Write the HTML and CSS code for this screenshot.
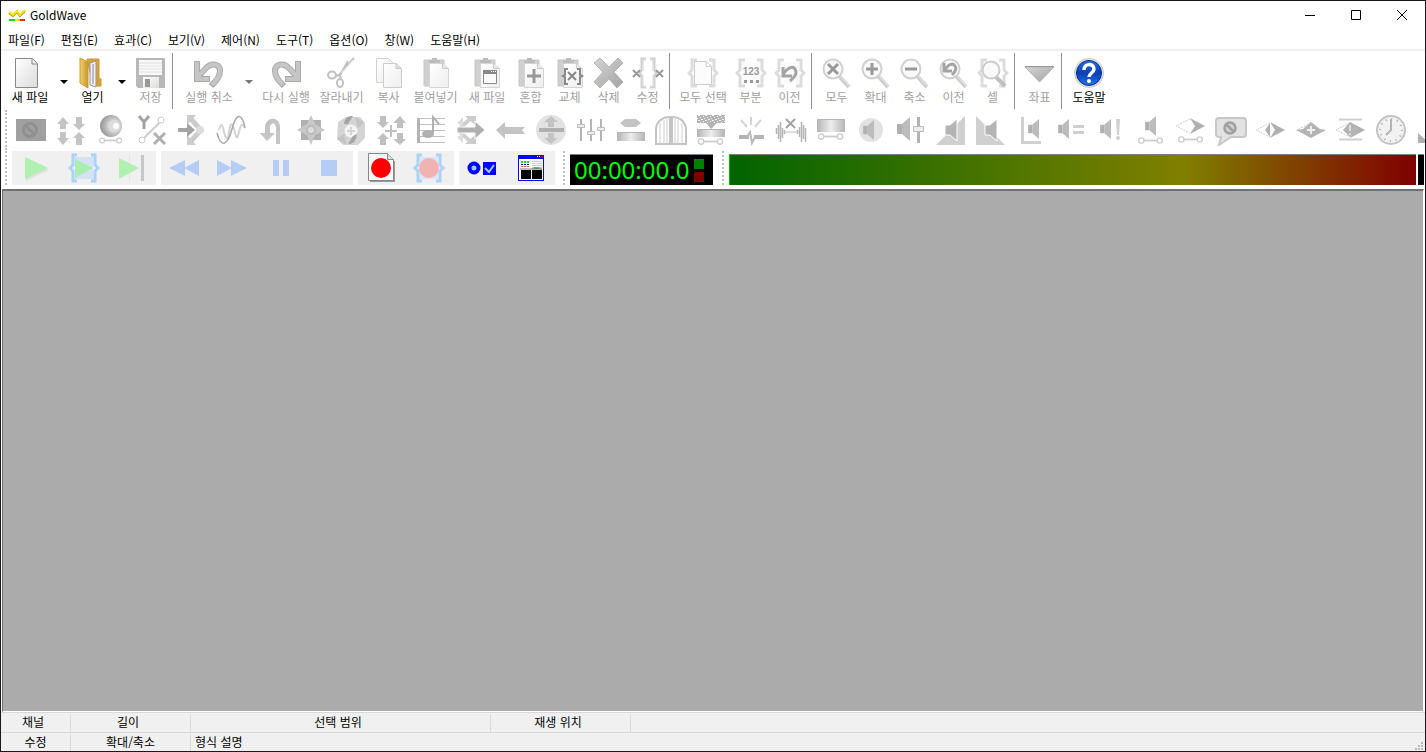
FILE: index.html
```html
<!DOCTYPE html>
<html lang="ko">
<head>
<meta charset="utf-8">
<title>GoldWave</title>
<link rel="stylesheet" href="styles.css">
</head>
<body>
<svg class="defs" aria-hidden="true">
  <defs>
    <linearGradient id="paper" x1="0" y1="0" x2="1" y2="1"><stop offset="0" stop-color="#fff"/><stop offset="1" stop-color="#dcdcdc"/></linearGradient>
    <linearGradient id="pale" x1="0" y1="0" x2="1" y2="1"><stop offset="0" stop-color="#fff"/><stop offset="1" stop-color="#eee"/></linearGradient>
    <linearGradient id="steel" x1="0" y1="0" x2="1" y2="1"><stop offset="0" stop-color="#d4d4d4"/><stop offset="1" stop-color="#a4a4a4"/></linearGradient>
    <linearGradient id="gold" x1="0" y1="0" x2="1" y2="0"><stop offset="0" stop-color="#f4cf68"/><stop offset="1" stop-color="#c9962c"/></linearGradient>
    <linearGradient id="tube" x1="0" y1="0" x2="1" y2="0"><stop offset="0" stop-color="#b4b4b4"/><stop offset=".5" stop-color="#eee"/><stop offset="1" stop-color="#b4b4b4"/></linearGradient>
    <radialGradient id="ball" cx=".65" cy=".5" r=".6"><stop offset="0" stop-color="#f4f4f4"/><stop offset=".5" stop-color="#ccc"/><stop offset="1" stop-color="#999"/></radialGradient>
    <linearGradient id="blue" x1="0" y1="0" x2="0" y2="1"><stop offset="0" stop-color="#2a72e0"/><stop offset=".5" stop-color="#0c3fb4"/><stop offset="1" stop-color="#2470e8"/></linearGradient>
    <pattern id="noise" width="7" height="5" patternUnits="userSpaceOnUse"><rect width="7" height="5" fill="#b4b4b4"/><path d="M0 0h1v1h-1zM3 1h2v1h-2zM1 2h1v1h-1zM5 3h1v1h-1zM2 4h1v1h-1zM6 0h1v1h-1z" fill="#f4f4f4"/></pattern>
    <symbol id="braces" viewBox="0 0 32 32"><path d="M10 3H5v10l-3 3 3 3v10h5M22 3h5v10l3 3-3 3v10h-5" fill="none" stroke="currentColor" stroke-width="3"/></symbol>
    <symbol id="undo-arrow" viewBox="0 0 32 32"><g fill="none" stroke="#aaa" stroke-width="6"><path d="M4 4v18h13M4 21L13 11c6-6 14-4 14 3 0 6-4 10-9 15"/><path d="M4 5v17h12M4 21L13 11c6-6 14-4 14 3 0 6-4 10-8 14" stroke="#c6c6c6" stroke-width="4"/></g></symbol>
    <symbol id="clip" viewBox="0 0 32 32"><path d="M4 3h20v26H4z" fill="#d0d0d0" stroke="#c6c6c6"/><path d="M9 6V3h3V1h5v2h3v3z" fill="#bcbcbc"/><path d="M9.500 6.500h13l6 5v19h-19z" fill="url(#pale)" stroke="#d4d4d4"/><path d="M22.500 6.500v5h6" fill="#e8e8e8" stroke="#ccc"/></symbol>
    <symbol id="lens" viewBox="0 0 32 32"><path d="M18 19l10 11" stroke="#ccc" stroke-width="4"/><path d="M19 19l10 11" stroke="#eee" stroke-width="1"/><circle cx="12" cy="12" r="9.5" fill="#fafafa" stroke="#d0d0d0" stroke-width="2"/></symbol>
    <symbol id="line" viewBox="0 0 32 10"><path d="M6 5h20" stroke="#ccc" stroke-width="2"/><circle cx="5" cy="5" r="3" fill="#fff" stroke="#ccc" stroke-width="1.5"/><circle cx="26" cy="5" r="3" fill="#fff" stroke="#ccc" stroke-width="1.5"/></symbol>
    <symbol id="speaker" viewBox="0 0 14 24"><path d="M0 7h5v10H0z" fill="#b0b0b0"/><path d="M5 7l8-7v24l-8-7z" fill="#bcbcbc"/></symbol>
    <symbol id="diamond" viewBox="0 0 32 16"><path d="M15 1L1 8l14 7" fill="#fff" stroke="#ccc" stroke-dasharray="2 1"/><path d="M15 0l15 8-15 8 5-8z" fill="#b0b0b0"/></symbol>
  </defs>
</svg>
<main class="window">
  <header class="titlebar">
    <svg class="logo" viewBox="0 0 18 16"><path d="M1 6l4 3 4-4 3 4 5-5" fill="none" stroke="#a89400" stroke-width="2"/><path d="M1 5l4 3 4-4 3 4 5-5" fill="none" stroke="#ffe600" stroke-width="2"/><path d="M1 12h6v2H1z" fill="#0d2"/><path d="M7 12h5v2H7z" fill="#fd0"/><path d="M12 12h5v2h-5z" fill="#f20"/></svg>
    <h1>GoldWave</h1>
    <div class="caption">
      <button aria-label="최소화"><svg viewBox="0 0 12 12"><path d="M1 6.500h10" stroke="#000"/></svg></button>
      <button aria-label="최대화"><svg viewBox="0 0 12 12"><path d="M1.500 1.500h9v9h-9z" fill="none" stroke="#000"/></svg></button>
      <button aria-label="닫기"><svg viewBox="0 0 12 12"><path d="M1 1l10 10M11 1L1 11" stroke="#000"/></svg></button>
    </div>
  </header>
  <nav class="menu">
    <button>파일(F)</button><button>편집(E)</button><button>효과(C)</button><button>보기(V)</button><button>제어(N)</button><button>도구(T)</button><button>옵션(O)</button><button>창(W)</button><button>도움말(H)</button>
  </nav>

  <div class="tools">
    <button class="tool mid on"><svg viewBox="0 0 32 32"><path d="M1.500 1.500h17l5 5v24h-22z" fill="url(#paper)" stroke="#888"/><path d="M18 1.500v5.500h5.500" fill="#eee" stroke="#888"/></svg>새 파일</button>
    <button class="drop" aria-label="새 파일 목록"><svg viewBox="0 0 8 4"><path d="M0 0h8L4 4z"/></svg></button>
    <button class="tool on"><svg viewBox="0 0 32 32"><path d="M10 2h12v19l2 1v7h-8z" fill="#d9a436" stroke="#c9973a"/><path d="M13 6l6-2v26l-6-2z" fill="#eee" stroke="#999"/><path d="M16 7v20" stroke="#bbc" stroke-width="2"/><path d="M3 1l8 4v26l-8-5z" fill="url(#gold)" stroke="#c49a38"/></svg>열기</button>
    <button class="drop" aria-label="열기 목록"><svg viewBox="0 0 8 4"><path d="M0 0h8L4 4z"/></svg></button>
    <button class="tool"><svg viewBox="0 0 32 32"><path d="M1 1h29v30H3l-2-2z" fill="#b8b8b8"/><path d="M4 3h23v15H4z" fill="#fafafa"/><path d="M4 6h23M4 9h23M4 12h23M4 15h23" stroke="#ddd"/><path d="M8 20h16v11H8z" fill="url(#paper)"/><path d="M10 22h5v8h-5z" fill="#999"/></svg>저장</button>
    <hr>
    <button class="tool undo"><svg viewBox="0 0 32 32"><use href="#undo-arrow"/></svg>실행 취소</button>
    <button class="drop off" aria-label="실행 취소 목록"><svg viewBox="0 0 8 4"><path d="M0 0h8L4 4z"/></svg></button>
    <button class="tool wide"><svg viewBox="0 0 32 32"><use href="#undo-arrow" transform="translate(32 0) scale(-1 1)"/></svg>다시 실행</button>
    <button class="tool long"><svg viewBox="0 0 32 32"><path d="M28 1L13 18l-4 1M22 4l-8 14 1 5" fill="none" stroke="#c0c0c0" stroke-width="2"/><path d="M27 3L15 16" stroke="#eee"/><ellipse cx="6" cy="18" rx="4" ry="3.500" fill="none" stroke="#c0c0c0" stroke-width="2"/><ellipse cx="14" cy="26" rx="3" ry="4" fill="none" stroke="#c0c0c0" stroke-width="2"/></svg>잘라내기</button>
    <button class="tool"><svg viewBox="0 0 32 32"><path d="M3.500 1.500h12l4 4v20h-16z" fill="url(#pale)" stroke="#d0d0d0"/><path d="M10.500 6.500h13l5 5v19h-18z" fill="url(#pale)" stroke="#ccc"/><path d="M23 6.500v5h5" fill="#ddd" stroke="#ccc"/></svg>복사</button>
    <button class="tool long"><svg viewBox="0 0 32 32"><use href="#clip"/></svg>붙여넣기</button>
    <button class="tool mid"><svg viewBox="0 0 32 32"><use href="#clip"/><path d="M12.500 13.500h13v13h-13z" fill="#fafafa" stroke="#888"/><path d="M12 13h14v4H12z" fill="#888"/><path d="M20 14h1v1h-1zM22 14h1v1h-1zM24 14h1v1h-1z" fill="#fff"/></svg>새 파일</button>
    <button class="tool"><svg viewBox="0 0 32 32"><use href="#clip"/><path d="M19 12v14M12 19h14" stroke="#999" stroke-width="3"/></svg>혼합</button>
    <button class="tool"><svg viewBox="0 0 32 32"><use href="#clip"/><path d="M14 12h-3v6l-2 1 2 1v7h3M23 12h3v6l2 1-2 1v7h-3M14 15l8 8M22 15l-8 8" fill="none" stroke="#888" stroke-width="2"/></svg>교체</button>
    <button class="tool"><svg viewBox="0 0 32 32"><path d="M7 1l9 9 9-9 5 5-9 9 9 10-6 6-8-9-9 9-6-6 9-10-9-9z" fill="url(#steel)" stroke="#b4b4b4"/></svg>삭제</button>
    <button class="tool"><svg viewBox="0 0 32 32"><path d="M14 2h-4v11l-2 3 2 3v11h4M18 2h4v11l2 3-2 3v11h-4" fill="none" stroke="#d0d0d0" stroke-width="3"/><path d="M14 3h-3v11l-2 2 2 2v11h3M18 3h3v11l2 2-2 2v11h-3" fill="none" stroke="#eee"/><path d="M1 13l7 7M8 13l-7 7M24 13l7 7M31 13l-7 7" stroke="#999" stroke-width="2"/></svg>수정</button>
    <hr>
    <button class="tool wide"><svg viewBox="0 0 32 32"><use href="#braces"/><path d="M7.500 4.500h12l5 5v18h-17z" fill="#fcfcfc" stroke="#ccc"/><path d="M19 4.500v5h5" fill="none" stroke="#ccc"/></svg>모두 선택</button>
    <button class="tool"><svg viewBox="0 0 32 32"><use href="#braces"/><path d="M7 5h18v22H7z" fill="#fafafa"/><text x="16" y="18" class="digits">123</text><path d="M9 23h3v3H9zM15 23h3v3h-3zM21 23h3v3h-3z" fill="#999"/></svg>부분</button>
    <button class="tool"><svg viewBox="0 0 32 32"><use href="#braces"/><path d="M7 5h18v22H7z" fill="#fafafa"/><path d="M9 10v9h9M9 18c4-8 10-9 12-6 3 4 0 8-5 12" fill="none" stroke="#a4a4a4" stroke-width="3"/></svg>이전</button>
    <hr>
    <button class="tool"><svg viewBox="0 0 32 32"><use href="#lens"/><path d="M7 7l10 10M17 7L7 17" stroke="#999" stroke-width="3"/></svg>모두</button>
    <button class="tool"><svg viewBox="0 0 32 32"><use href="#lens"/><path d="M12 6v12M6 12h12" stroke="#999" stroke-width="3"/></svg>확대</button>
    <button class="tool"><svg viewBox="0 0 32 32"><use href="#lens"/><path d="M6 12h12" stroke="#999" stroke-width="3"/></svg>축소</button>
    <button class="tool"><svg viewBox="0 0 32 32"><use href="#lens"/><path d="M6 6v8h8M6 14c5-8 9-8 11-5 2 3 0 6-3 9" fill="none" stroke="#a4a4a4" stroke-width="3"/></svg>이전</button>
    <button class="tool"><svg viewBox="0 0 32 32"><use href="#braces"/><path d="M19 20l9 9" stroke="#c0c0c0" stroke-width="4"/><circle cx="14" cy="13" r="8.500" fill="#fafafa" stroke="#ccc" stroke-width="2"/></svg>셀</button>
    <hr>
    <button class="tool"><svg viewBox="0 0 32 32"><path d="M1 10h29L15.500 25z" fill="url(#steel)" stroke="#b4b4b4"/><path d="M1 9.500h29" stroke="#999"/></svg>좌표</button>
    <hr>
    <button class="tool help on"><svg viewBox="0 0 32 32"><circle cx="16" cy="16" r="14.500" fill="#ddd" stroke="#ccc"/><circle cx="16" cy="16" r="12.500" fill="url(#blue)" stroke="#063090"/><path d="M11 13c0-7 10-7 10-1 0 4-5 4-5 8" fill="none" stroke="#fff" stroke-width="3.500"/><circle cx="16" cy="24" r="2" fill="#fff"/></svg>도움말</button>
  </div>

  <div class="effects">
    <i class="grip"></i>
    <button aria-label="검열"><svg viewBox="0 0 32 32"><path d="M1 5h30v22H1z" fill="#a0a0a0"/><circle cx="15" cy="16" r="6.500" fill="none" stroke="#909090" stroke-width="3"/><path d="M10 11l10 10" stroke="#909090" stroke-width="3"/></svg></button>
    <button aria-label="압축"><svg viewBox="0 0 32 32"><path d="M8 3l6 7h-3v5H5v-5H2zM8 31l6-7h-3v-6H5v6H2zM24 16l6-6h-3V3h-6v7h-3zM24 18l6 6h-3v7h-6v-7h-3z" fill="#c4c4c4"/></svg></button>
    <button aria-label="도플러"><svg viewBox="0 0 32 32"><circle cx="16" cy="12" r="11" fill="url(#ball)"/><circle cx="19" cy="12" r="6" fill="#ddd"/><circle cx="21" cy="12" r="3" fill="#fff"/><use href="#line" x="3" y="22" width="26" height="9"/></svg></button>
    <button aria-label="동적 범위"><svg viewBox="0 0 32 32"><path d="M4 2l5 6 5-6M9 8v7" stroke="#a4a4a4" stroke-width="3" fill="none"/><path d="M8 25L26 7" stroke="#ccc" stroke-width="2"/><circle cx="26" cy="6" r="3" fill="#fff" stroke="#ccc"/><circle cx="7" cy="26" r="3" fill="#fff" stroke="#ccc"/><path d="M19 19l11 11M30 19L19 30" stroke="#b0b0b0" stroke-width="3"/></svg></button>
    <button aria-label="에코"><svg viewBox="0 0 32 32"><path d="M16 5l8 9M16 27l8-9" stroke="#ccc" stroke-width="5"/><path d="M12 1h9l-9 10zM12 31h9l-9-10z" fill="#ccc"/><circle cx="25" cy="16" r="4" fill="#ddd"/><path d="M3 14h9V9l8 7-8 7v-5H3z" fill="#a4a4a4"/></svg></button>
    <button aria-label="필터"><svg viewBox="0 0 32 32"><path d="M4 16c2-7 3-7 5 2s4 7 5 0 3-12 5-3 3 12 5 3 3-9 6-4" fill="none" stroke="#d4d4d4" stroke-width="2"/><path d="M2 19c4 16 11 12 15-4S27-2 30 14" fill="none" stroke="#aaa" stroke-width="1.500"/></svg></button>
    <button aria-label="반전"><svg viewBox="0 0 32 32"><path d="M5 19h5v-5c0-12 15-12 15-1v17h-4V14c0-6-6-6-6 0v5h5l-8 8z" fill="#c4c4c4"/></svg></button>
    <button aria-label="기계음"><svg viewBox="0 0 32 32"><path d="M6 6h20v20H6z" fill="#b0b0b0"/><path d="M16 1l4 9 10 6-10 5-4 10-4-10-10-5 10-6z" fill="#c8c8c8"/><circle cx="16" cy="16" r="5" fill="#bbb"/><circle cx="16" cy="16" r="3" fill="#ddd"/></svg></button>
    <button aria-label="오프셋"><svg viewBox="0 0 32 32"><path d="M3 8l8-5 14 0 5 6v15l-7 7H8l-6-6z" fill="#d4d4d4"/><circle cx="16" cy="17" r="6.500" fill="#f4f4f4"/><path d="M9 10q1-9 9-8l-5 8zM22 20q-1 10-9 10l5-8z" fill="#a4a4a4"/><path d="M20 3l9 5-6 6M12 31l-10-6 7-5" fill="#c4c4c4"/><path d="M16 13v8M12 17h8" stroke="#d4d4d4" stroke-width="2"/></svg></button>
    <button aria-label="속도"><svg viewBox="0 0 32 32"><path d="M8 14l6-6h-3V2H5v6H2zM25 2l6 7h-3v5h-6V9h-4zM8 19l6 6h-3v6H5v-6H2zM25 31l6-6h-3v-6h-6v6h-4z" fill="#c0c0c0"/><path d="M16 11v12M10 17h12" stroke="#c0c0c0" stroke-width="2"/></svg></button>
    <button aria-label="음높이"><svg viewBox="0 0 32 32"><path d="M2 4.500h28M2 10.500h28M2 16.500h28M2 22.500h28M2 28.500h28" stroke="#c0c0c0"/><path d="M3.500 4v25" stroke="#b4b4b4" stroke-width="3"/><ellipse cx="13" cy="20" rx="6" ry="4" fill="#b0b0b0"/><path d="M18 20V3l6 7" fill="none" stroke="#b0b0b0" stroke-width="2"/></svg></button>
    <button aria-label="반향"><svg viewBox="0 0 32 32"><path d="M5 14L15 5M5 18l10 9" stroke="#d0d0d0" stroke-width="4"/><path d="M10 2h11v10zM10 30h11V20z" fill="#ccc"/><path d="M2 9l6-6v9M2 23l6 6v-9" fill="#ddd"/><path d="M2 13h18V7l10 9-10 9v-6H2z" fill="#b0b0b0" stroke="#fff"/></svg></button>
    <button aria-label="뒤집기"><svg viewBox="0 0 32 32"><path d="M1 16l9-8v5h20l-3 3 3 4H10v5z" fill="#c4c4c4"/></svg></button>
    <button aria-label="음량 변형"><svg viewBox="0 0 32 32"><circle cx="16" cy="16" r="15" fill="#e2e2e2"/><path d="M16 2l7 6h-4v5h-6V8H9zM16 30l7-6h-4v-5h-6v5H9z" fill="#c4c4c4"/><path d="M4 14h25v4H4z" fill="#b0b0b0"/></svg></button>
    <button aria-label="이퀄라이저"><svg viewBox="0 0 32 32"><path d="M6 5v22M16 5v22M26 5v22" stroke="#b4b4b4" stroke-width="2"/><path d="M2.500 10.500h7v3h-7zM12.500 17.500h7v3h-7zM22.500 13.500h7v3h-7z" fill="#eee" stroke="#bbb"/></svg></button>
    <button aria-label="스펙트럼"><svg viewBox="0 0 32 32"><path d="M5 9l5-4h11l5 4-5 4H10z" fill="#c4c4c4"/><path d="M2 18h28v9H2z" fill="url(#tube)"/><path d="M2 18.500h28" stroke="#b4b4b4"/></svg></button>
    <button aria-label="게이트"><svg viewBox="0 0 32 32"><path d="M1 30V16C1 7 8 3 15 3v27zM17 3c7 0 14 4 14 13v14H17z" fill="#fff" stroke="#c4c4c4" stroke-width="2"/><path d="M5 9v21M9 6v24M12 5v25M20 5v25M23 6v24M27 9v21" stroke="#ccc"/></svg></button>
    <button aria-label="잡음 감소"><svg viewBox="0 0 32 32"><path d="M2 1h28v8H2z" fill="url(#noise)"/><path d="M11 9h11l-6 6z" fill="#b4b4b4"/><path d="M2 15h28v8H2z" fill="url(#tube)"/><path d="M2 15.500h28" stroke="#b4b4b4"/><use href="#line" x="1" y="23" width="30" height="9"/></svg></button>
    <button aria-label="클릭 제거"><svg viewBox="0 0 32 32"><path d="M16 3v8M6 6l6 7M26 6l-6 7" stroke="#d4d4d4" stroke-width="2"/><path d="M4 23h10M19 23h10" stroke="#b4b4b4" stroke-width="4"/><path d="M12 23l3-5 2 11 3-6" fill="none" stroke="#bbb" stroke-width="2"/></svg></button>
    <button aria-label="무음 제거"><svg viewBox="0 0 32 32"><path d="M1.500 14v6M3.500 11v14M5.500 8v20M7.500 14v10M9.500 16v4M22.500 16v4M24.500 13v10M26.500 8v20M28.500 11v14M30.500 14v14" stroke="#b4b4b4" stroke-width="1.500"/><path d="M9 18h14" stroke="#c0c0c0"/><path d="M11 5l9 9M20 5l-9 9" stroke="#a4a4a4" stroke-width="2"/></svg></button>
    <button aria-label="평활화"><svg viewBox="0 0 32 32"><path d="M2 5h28v13H2z" fill="url(#tube)"/><path d="M2 5.500h28" stroke="#b4b4b4"/><use href="#line" x="1" y="18" width="30" height="9"/></svg></button>
    <button aria-label="자동 음량"><svg viewBox="0 0 32 32"><circle cx="16" cy="16" r="12" fill="#e2e2e2"/><use href="#speaker" x="8" y="6" width="12" height="20"/></svg></button>
    <button aria-label="음량"><svg viewBox="0 0 32 32"><use href="#speaker" x="2" y="3" width="14" height="24"/><path d="M23.500 3v26" stroke="#b4b4b4" stroke-width="3"/><path d="M18.500 12.500h10v5h-10z" fill="#eee" stroke="#bbb"/></svg></button>
    <button aria-label="페이드 인"><svg viewBox="0 0 32 32"><path d="M1 31L30 2v29z" fill="#d0d0d0"/><path d="M10 11h5l7-6v22l-7-6h-5z" fill="#b4b4b4" stroke="#fff"/></svg></button>
    <button aria-label="페이드 아웃"><svg viewBox="0 0 32 32"><path d="M1 2l29 29H1z" fill="#d0d0d0"/><path d="M10 11h5l7-6v22l-7-6h-5z" fill="#b4b4b4" stroke="#fff"/></svg></button>
    <button aria-label="최대화 음량"><svg viewBox="0 0 32 32"><path d="M7.500 3v25.500H26" fill="none" stroke="#d0d0d0" stroke-width="3"/><use href="#speaker" x="13" y="5" width="12" height="20"/></svg></button>
    <button aria-label="음량 일치"><svg viewBox="0 0 32 32"><use href="#speaker" x="3" y="5" width="12" height="20"/><path d="M18 12.500h11M18 18.500h11" stroke="#d0d0d0" stroke-width="3"/></svg></button>
    <button aria-label="최대 음량"><svg viewBox="0 0 32 32"><use href="#speaker" x="5" y="5" width="12" height="20"/><path d="M21 5h4l-1 16h-2z" fill="#d0d0d0"/><circle cx="23" cy="24" r="2" fill="#d0d0d0"/></svg></button>
    <button aria-label="음량 곡선"><svg viewBox="0 0 32 32"><use href="#speaker" x="10" y="2" width="12" height="20"/><use href="#line" x="2" y="22" width="28" height="9"/></svg></button>
    <button aria-label="팬"><svg viewBox="0 0 32 32"><use href="#diamond" x="0" y="4" width="32" height="16"/><use href="#line" x="2" y="21" width="28" height="9"/></svg></button>
    <button aria-label="음성 제거"><svg viewBox="0 0 32 32"><path d="M4 4h24q3 0 3 3v13q0 3-3 3H16L4 31l2-8H4q-3 0-3-3V7q0-3 3-3z" fill="#e2e2e2" stroke="#c8c8c8" stroke-width="2"/><circle cx="15" cy="14" r="5.500" fill="#d0d0d0" stroke="#a0a0a0" stroke-width="2.500"/><path d="M11 10l8 8" stroke="#a0a0a0" stroke-width="2.500"/></svg></button>
    <button aria-label="채널 혼합"><svg viewBox="0 0 32 32"><use href="#diamond" x="0" y="8" width="32" height="16"/><path d="M15 9v14l-5-7z" fill="#b0b0b0"/></svg></button>
    <button aria-label="최대 일치"><svg viewBox="0 0 32 32"><path d="M16 9L2 16l14 7" fill="#fff" stroke="#ccc" stroke-dasharray="2 1"/><path d="M16 8l9 7 6 1-15 8-9-5-6-3 7-1z" fill="#b4b4b4"/><path d="M16 12v8M12 16h8" stroke="#eee" stroke-width="2"/></svg></button>
    <button aria-label="스테레오"><svg viewBox="0 0 32 32"><path d="M4 5.500h23M4 25.500h23" stroke="#d0d0d0" stroke-width="2"/><use href="#diamond" x="0" y="8" width="32" height="16"/><path d="M15 8l-7 8 7 7 9-7z" fill="#b4b4b4"/><path d="M15 11v6M15 19v2" stroke="#ddd" stroke-width="2"/></svg></button>
    <button aria-label="시간"><svg viewBox="0 0 32 32"><circle cx="16" cy="16" r="14" fill="#f2f2f2" stroke="#c4c4c4" stroke-width="2"/><circle cx="16" cy="16" r="11" fill="none" stroke="#aaa" stroke-width="2" stroke-dasharray="1 4.760"/><path d="M16 5v11l-5 5" fill="none" stroke="#b4b4b4" stroke-width="2"/></svg></button>
    <button aria-label="배치"><svg viewBox="0 0 32 32"><path d="M3 19l11 10H3z" fill="#b0b0b0"/></svg></button>
  </div>

  <div class="transport">
    <i class="grip"></i>
    <div class="group">
      <button aria-label="재생"><svg viewBox="0 0 48 34"><path d="M14 7l23 12-23 11z" fill="#e0e0e0"/><path d="M13 6l23 11-23 11z" fill="#b0f0b0"/></svg></button>
      <button aria-label="선택 재생"><svg viewBox="0 0 48 34"><path d="M15 6h18v22H15z" fill="#d4e2f4"/><path d="M17 4h-4v10l-3 3 3 3v10h4M31 4h4v10l3 3-3 3v10h-4" fill="none" stroke="#acd2f8" stroke-width="3"/><path d="M15 8l18 9-18 10z" fill="#a8eeb0"/></svg></button>
      <button aria-label="끝 재생"><svg viewBox="0 0 48 34"><path d="M21 4h1v26h-1z" fill="#e4e4e4"/><path d="M11 7l20 10-20 11z" fill="#b0f0b0"/><path d="M33 4h3v26h-3z" fill="#c4c8c8"/></svg></button>
    </div>
    <div class="group">
      <button aria-label="되감기"><svg viewBox="0 0 48 34"><path d="M24 9v16L8 17zM38 9v16l-15-8z" fill="#b4ccf6"/></svg></button>
      <button aria-label="빨리 감기"><svg viewBox="0 0 48 34"><path d="M8 9v16l15-8zM22 9v16l16-8z" fill="#b4ccf6"/></svg></button>
      <button aria-label="일시 정지"><svg viewBox="0 0 48 34"><path d="M16 9h6v16h-6zM26 9h6v16h-6z" fill="#b4ccf6"/></svg></button>
      <button aria-label="정지"><svg viewBox="0 0 48 34"><path d="M16 9h16v16H16z" fill="#b4ccf6"/></svg></button>
    </div>
    <div class="group">
      <button aria-label="녹음"><svg viewBox="0 0 48 34"><path d="M12 10h25v21H12z" fill="#999"/><path d="M10.500 2.500h19l6 6v21h-25z" fill="#f8f8f8" stroke="#888"/><path d="M29.500 2.500v6h6" fill="#ddd" stroke="#888"/><circle cx="23" cy="17" r="10" fill="#f00"/></svg></button>
      <button aria-label="선택 녹음"><svg viewBox="0 0 48 34"><path d="M14 6h18v22H14z" fill="#dbe6f4"/><path d="M16 4h-4v10l-3 3 3 3v10h4M30 4h4v10l3 3-3 3v10h-4" fill="none" stroke="#acd2f8" stroke-width="3"/><circle cx="23" cy="17" r="10" fill="#f2b2b2"/></svg></button>
    </div>
    <div class="group">
      <button aria-label="제어 속성"><svg viewBox="0 0 48 34"><circle cx="15" cy="17" r="4.500" fill="#9ce" stroke="#00f" stroke-width="4"/><path d="M24 11h13v13H24z" fill="#00f"/><path d="M26 17l4 4 5-7" fill="none" stroke="#9cf" stroke-width="2"/></svg></button>
      <button aria-label="창 배치"><svg viewBox="0 0 48 34"><path d="M11 4h26v26H11z" fill="#00f"/><path d="M12 8h24v21H12z" fill="#fff"/><path d="M30 5h1v1h-1zM32 5h1v1h-1z" fill="#fff"/><path d="M34 5h2v1h-2z" fill="#f00"/><path d="M14 11h9" stroke="#0e0" stroke-width="2" stroke-dasharray="2 1"/><path d="M14 13.500h9" stroke="#00f" stroke-dasharray="2 1"/><path d="M14 15.500h9" stroke="#f44" stroke-dasharray="2 1"/><path d="M25 10.500h10M25 12.500h10M25 14.500h10" stroke="#ccc"/><path d="M13 18h22M25 17h10" stroke="#777"/><path d="M27 17h5" stroke="#0a0"/><path d="M14 19h10v9H14zM25 19h10v9H25z"/></svg></button>
    </div>
    <i class="grip later"></i>
    <div class="clock"><output>00:00:00.0</output><div class="lights"><i></i><i></i></div></div>
    <i class="grip later"></i>
    <div class="meter"></div>
    <div class="edge"></div>
  </div>

  <section class="workspace" aria-label="작업 영역"></section>

  <footer class="status">
    <div class="cells top"><span>채널</span><span>길이</span><span>선택 범위</span><span>재생 위치</span></div>
    <div class="cells"><span>수정</span><span>확대/축소</span><span class="format">형식 설명</span></div>
    <svg class="sizer" viewBox="0 0 10 10"><path d="M7 1h2v2H7zM4 4h2v2H4zM7 4h2v2H7zM1 7h2v2H1zM4 7h2v2H4zM7 7h2v2H7z" fill="#bbb"/></svg>
  </footer>
</main>
</body>
</html>
```
FILE: styles.css
```css
* { box-sizing: border-box; }
body {
  margin: 0;
  background: #fff;
  color: #000;
  font: 12px/16px "Noto Sans CJK KR", "Noto Sans", sans-serif;
}
button {
  padding: 0;
  border: 0;
  background: none;
  color: inherit;
  font: inherit;
  white-space: nowrap;
}
svg { display: block; flex: none; }
.defs { position: absolute; width: 0; height: 0; }

.window {
  display: flex;
  flex-direction: column;
  height: 100vh;
  overflow: hidden;
  border: 1px solid #1b181b;
}

.titlebar { display: flex; align-items: center; height: 28px; padding-left: 7px; }
.logo { width: 18px; height: 16px; }
h1 { margin: 0 auto 0 4px; font: inherit; }
.caption { display: flex; }
.caption button { display: grid; place-items: center; width: 46px; height: 28px; }
.caption svg { width: 12px; height: 12px; }

.menu {
  display: flex;
  gap: 16px;
  height: 22px;
  padding: 2px 0 0 7px;
  border-bottom: 2px solid #f0f0f0;
}

.tools { display: flex; height: 59px; padding: 2px 0 0 5px; }
.tools hr { flex: none; width: 1px; height: 56px; margin: 0 5px 0 2px; border: 0; background: #909090; }
.tool {
  display: flex;
  flex: none;
  flex-direction: column;
  align-items: center;
  width: 39px;
  padding-top: 4px;
  color: #a0a0a0;
}
.tool svg { width: 32px; height: 32px; color: #dcdcdc; }
.tool.on { color: #000; }
.tool.mid { width: 48px; }
.tool.long { width: 55px; }
.tool.wide { width: 56px; }
.tool.undo { width: 62px; }
.tool.help { width: 44px; }
.digits { fill: #999; font: bold 10px "Liberation Sans", sans-serif; text-anchor: middle; }
.drop { display: grid; flex: none; place-items: center; width: 19px; }
.drop svg { width: 8px; height: 4px; }
.drop.off { width: 18px; fill: #777; }

.grip { flex: none; width: 2px; margin-right: 5px; border-left: 2px dotted #c0c0c0; }
.effects { display: flex; height: 40px; padding-left: 4px; overflow: hidden; }
.effects button { flex: none; width: 40px; padding: 4px 5px 4px 3px; }
.effects svg { width: 32px; height: 32px; }

.transport { display: flex; height: 39px; padding: 1px 1px 4px 4px; }
.group { display: flex; flex: none; margin-right: 5px; background: #f0f0f0; }
.group button { width: 48px; }
.group svg { width: 48px; height: 34px; }
.grip.later { margin-left: 3px; }
.clock {
  display: flex;
  flex: none;
  align-items: center;
  justify-content: space-between;
  width: 143px;
  margin: 3px 6px 0 0;
  padding: 0 9px 0 4px;
  border-top: 1px solid #808080;
  background: #000;
}
output { color: #00ff00; font: 24px/30px "Noto Sans", sans-serif; }
.lights { display: grid; gap: 3px; }
.lights i { width: 10px; height: 10px; background: #008000; }
.lights i:last-child { background: #800000; }
.meter {
  flex: 1;
  margin-top: 3px;
  border-top: 1px solid #808080;
  border-left: 1px solid #00c000;
  background: linear-gradient(90deg, #006400, #808000 66%, #800000);
}
.edge { width: 6px; margin: 3px 0 0 2px; border-top: 1px solid #808080; background: #000; }

.workspace {
  flex: 1;
  margin: 0 1px;
  border: 1px solid #fff;
  border-top: 2px solid #707070;
  border-left-color: #707070;
  background: #ababab;
}

.status { position: relative; background: #f0f0f0; }
.cells {
  display: grid;
  grid-template-columns: 70px 120px 300px 140px 1fr;
  height: 19px;
  padding-top: 1px;
  border-top: 1px solid #d9d9d9;
}
.cells span { border-right: 1px solid #d9d9d9; text-align: center; }
.cells.top { height: 20px; }
.cells.top span { padding-right: 5px; }
.cells .format { padding-left: 4px; border: 0; text-align: left; }
.sizer { position: absolute; right: 1px; bottom: 0; width: 10px; height: 10px; }
```
